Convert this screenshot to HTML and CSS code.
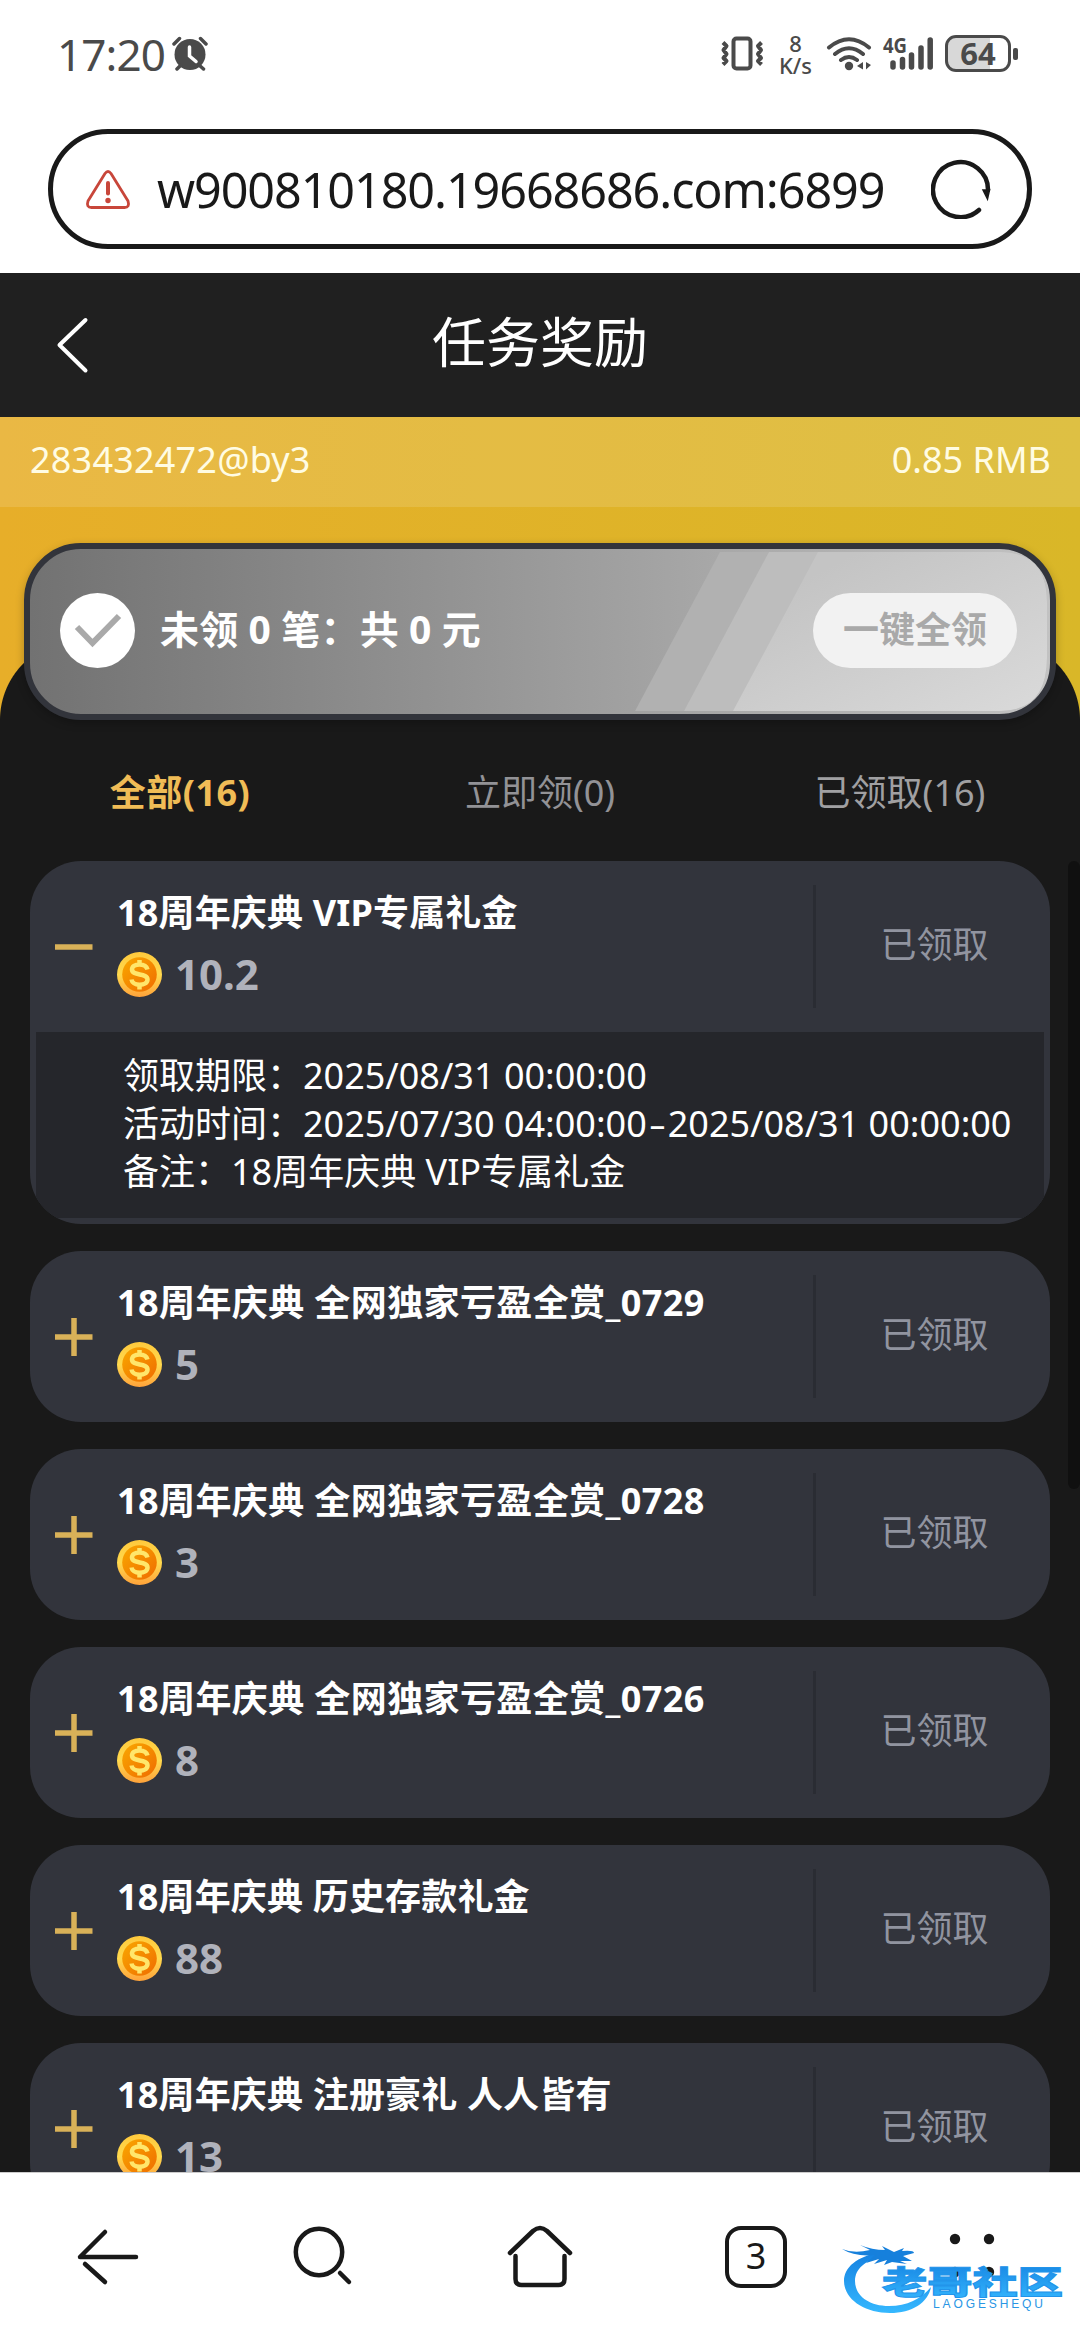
FILE: index.html
```html
<!DOCTYPE html>
<html lang="zh-CN">
<head>
<meta charset="utf-8">
<title>任务奖励</title>
<link rel="stylesheet" href="styles.css">
</head>
<body>
<svg width="0" height="0" class="defs">
  <defs>
    <linearGradient id="rim" x1="0" y1="0" x2="0" y2="1"><stop offset="0" stop-color="#ffc93c"/><stop offset=".5" stop-color="#ffd94e"/><stop offset="1" stop-color="#ffa23a"/></linearGradient>
    <linearGradient id="core" x1="0" y1="0" x2="1" y2="1"><stop offset="0" stop-color="#f9a800"/><stop offset="1" stop-color="#ef6c00"/></linearGradient>
    <linearGradient id="water" x1="0" y1="0" x2="0" y2="1"><stop offset="0" stop-color="#1480e0"/><stop offset="1" stop-color="#35b8ff"/></linearGradient>
    <symbol id="coin" viewBox="0 0 45 45">
      <circle cx="22.5" cy="22.5" r="22.5" fill="url(#rim)"/>
      <circle cx="22.5" cy="22.5" r="17.3" fill="url(#core)"/>
      <path d="M30.500 17.500C29.500 14 26.500 12.500 22.500 12.500C18 12.500 15 14.500 15 17.600C15 24.500 30.500 20.500 30.500 27.500C30.500 31 27 32.700 22.600 32.700C18 32.700 15 30.500 14.500 27.500M22.500 8V12.500M22.500 32.500V37.500" fill="none" stroke="#ffe66b" stroke-width="4.500"/>
    </symbol>
    <symbol id="plus" viewBox="0 0 38 38"><path d="M0 19H37.500M19 0V38" stroke="#d9b158" stroke-width="5.500"/></symbol>
    <symbol id="minus" viewBox="0 0 38 38"><path d="M0 19H37.500" stroke="#d9b158" stroke-width="5.500"/></symbol>
  </defs>
</svg>
<div class="screen">
  <div class="statusbar">
    <span class="clock">17:20</span>
    <svg class="alarm" width="36" height="36" viewBox="172 36 36 36">
      <circle cx="190" cy="54.500" r="15.500" fill="#4a4a4a"/>
      <path d="M174 44L179.500 38.500M206 44L200.500 38.500M181 65L177 69M199 65L203.500 69" stroke="#4a4a4a" stroke-width="3.500" stroke-linecap="round"/>
      <path d="M189.500 47V56L196 61.500" fill="none" stroke="#fff" stroke-width="3.500" stroke-linecap="round"/>
    </svg>
    <div class="spacer"></div>
    <svg class="vibrate" width="44" height="36" viewBox="720 36 44 36" fill="none" stroke="#4a4a4a">
      <rect x="733.500" y="38.500" width="17" height="30" rx="3" stroke-width="4"/>
      <path d="M723 42.500L726.500 46L723.500 50L726.500 54L723.500 58L726.500 61L723 64.500M761.500 42.500L758 46L761 50L758 54L761 58L758 61L761.500 64.500" stroke-width="4" stroke-linejoin="round"/>
    </svg>
    <div class="speed"><span>8</span><span>K/s</span></div>
    <svg class="wifi" width="46" height="36" viewBox="826 36 46 36" fill="none" stroke="#4a4a4a" stroke-width="4" stroke-linecap="round">
      <path d="M829 47.500Q849 31 869 47.500M835 54Q849 42.500 863 54M841 60Q849 54 857 60"/>
      <circle cx="849" cy="66" r="4.200" fill="#4a4a4a" stroke="none"/>
      <path d="M863 62V69.500L857 66ZM866 62V69.500L871 65Z" fill="#4a4a4a" stroke="none"/>
    </svg>
    <svg class="signal" width="52" height="36" viewBox="882 36 52 36" stroke="#4a4a4a" stroke-width="5.500" stroke-linecap="round">
      <path d="M893 63V67M902.500 59.500V67M911.500 55V67M921 48V67M930.200 40V67"/>
      <text x="883" y="53" class="net" textLength="24" lengthAdjust="spacingAndGlyphs">4G</text>
    </svg>
    <div class="battery"><span class="cell">64</span><i class="nub"></i></div>
  </div>
  <div class="urlbar">
    <svg width="46" height="42" viewBox="85 167 46 42" fill="none" stroke="#c8463a" stroke-linecap="round">
      <path d="M105 172.500Q108 168.500 111 172.500L128 200Q130 206.500 124.500 206.500H91.500Q86 206.500 88 200Z" stroke-width="2.800" stroke-linejoin="round"/>
      <path d="M108 182V192.500" stroke-width="4"/><circle cx="108" cy="199.500" r="2.700" fill="#c8463a" stroke="none"/>
    </svg>
    <span class="url">w900810180.19668686.com:6899</span>
    <svg width="60" height="60" viewBox="930 159 60 60" fill="none" stroke="#191919" stroke-width="4.500" stroke-linecap="round">
      <path d="M978 210A27.500 27.500 0 1 1 987 190"/><path d="M982 190L988.500 190L986.500 199Z" stroke-width="1.500" fill="#191919"/>
    </svg>
  </div>
  <div class="page">
    <div class="titlebar">
      <svg class="chevron" width="34" height="58" viewBox="56 316 34 58"><path d="M85.500 320L59.500 345L85.500 370.500" fill="none" stroke="#fff" stroke-width="4" stroke-linecap="round" stroke-linejoin="round"/></svg>
      <h1>任务奖励</h1>
    </div>
    <div class="hero">
      <div class="account"><span class="user">283432472@by3</span><span class="balance">0.85 RMB</span></div>
      <div class="summary">
        <svg class="stripes" width="424" height="159" viewBox="0 0 424 159" preserveAspectRatio="none">
          <defs><linearGradient id="sheen" x1="0" y1="0" x2="1" y2="1"><stop offset=".2" stop-color="#c4c4c4"/><stop offset="1" stop-color="#dadada"/></linearGradient></defs>
          <path d="M85 0H365Q412 0 412 50V105Q412 159 365 159H0Z" fill="#b1b1b1"/><path d="M134 0H365Q412 0 412 50V105Q412 159 365 159H49Z" fill="#bdbdbd"/><path d="M183 0H365Q412 0 412 50V105Q412 159 365 159H98Z" fill="url(#sheen)"/>
        </svg>
        <svg class="check" width="75" height="75" viewBox="0 0 75 75"><circle cx="37.500" cy="37.500" r="37.500" fill="#fff"/><path d="M17 34L32.500 50L59 23" fill="none" stroke="#a9a9a9" stroke-width="6"/></svg>
        <span class="pending">未领 0 笔：共 0 元</span>
        <span class="claim">一键全领</span>
      </div>
    </div>
    <div class="tabs"><span class="tab active">全部(16)</span><span class="tab">立即领(0)</span><span class="tab done">已领取(16)</span></div>
    <div class="list">
      <div class="card">
        <div class="row"><svg class="toggle"><use href="#minus"/></svg><div class="info"><div class="name">18周年庆典 VIP专属礼金</div><div class="amount"><svg class="coin"><use href="#coin"/></svg>10.2</div></div><div class="state">已领取</div></div>
        <div class="details"><p>领取期限：2025/08/31 00:00:00</p><p>活动时间：2025/07/30 04:00:00<span class="dash">-</span>2025/08/31 00:00:00</p><p>备注：18周年庆典 VIP专属礼金</p></div>
      </div>
      <div class="card"><div class="row"><svg class="toggle"><use href="#plus"/></svg><div class="info"><div class="name wide">18周年庆典 全网独家亏盈全赏_0729</div><div class="amount"><svg class="coin"><use href="#coin"/></svg>5</div></div><div class="state">已领取</div></div></div>
      <div class="card"><div class="row"><svg class="toggle"><use href="#plus"/></svg><div class="info"><div class="name wide">18周年庆典 全网独家亏盈全赏_0728</div><div class="amount"><svg class="coin"><use href="#coin"/></svg>3</div></div><div class="state">已领取</div></div></div>
      <div class="card"><div class="row"><svg class="toggle"><use href="#plus"/></svg><div class="info"><div class="name wide">18周年庆典 全网独家亏盈全赏_0726</div><div class="amount"><svg class="coin"><use href="#coin"/></svg>8</div></div><div class="state">已领取</div></div></div>
      <div class="card"><div class="row"><svg class="toggle"><use href="#plus"/></svg><div class="info"><div class="name">18周年庆典 历史存款礼金</div><div class="amount"><svg class="coin"><use href="#coin"/></svg>88</div></div><div class="state">已领取</div></div></div>
      <div class="card"><div class="row"><svg class="toggle"><use href="#plus"/></svg><div class="info"><div class="name">18周年庆典 注册豪礼 人人皆有</div><div class="amount"><svg class="coin"><use href="#coin"/></svg>13</div></div><div class="state">已领取</div></div></div>
      <i class="scrollbar"></i>
    </div>
  </div>
  <div class="navbar">
    <span class="nav"><svg width="66" height="66" viewBox="75 2224 66 66"><path d="M136 2257H80L105 2232M85 2264L105 2282"/></svg></span>
    <span class="nav"><svg width="66" height="66" viewBox="291 2224 66 66"><circle cx="319" cy="2252" r="23.200"/><path d="M340 2273L349 2282"/></svg></span>
    <span class="nav"><svg width="66" height="66" viewBox="507 2224 66 66"><path d="M510 2253L533 2231Q540 2225 547 2231L570 2253M515.500 2256V2279Q515.500 2285 521.500 2285H558.500Q564.500 2285 564.500 2279V2256"/></svg></span>
    <span class="nav"><span class="count">3</span></span>
    <span class="nav"><svg width="66" height="66" viewBox="939 2224 66 66"><g fill="#191919" stroke="none"><circle cx="955" cy="2239" r="5.200"/><circle cx="989" cy="2239" r="5.200"/><circle cx="955" cy="2272" r="5.200"/><circle cx="989" cy="2272" r="5.200"/></g></svg></span>
    <svg class="watermark" width="230" height="80" viewBox="840 2240 230 80">
      <path d="M882 2252C856 2256 844 2268 844 2281C844 2299 864 2313 890 2313C912 2313 928 2303 931 2287C921 2299 907 2306 889 2306C868 2306 855 2295 855 2281C855 2269 865 2260 882 2257Z" fill="url(#water)"/>
      <path d="M842 2249Q854 2254 870 2250L860 2245Q872 2250 885 2250L882 2246L894 2252L904 2248L902 2251Q914 2250 914 2253L903 2256L912 2261L900 2261L907 2264L892 2262L884 2265L887 2260L874 2264L879 2259L866 2263L875 2255Q855 2257 842 2249Z" fill="#1680dc"/>
      <text class="wm-name" x="882" y="2294" textLength="181" lengthAdjust="spacingAndGlyphs">老哥社区</text>
      <text class="wm-sub" x="933" y="2307.500" textLength="110">LAOGESHEQU</text>
    </svg>
  </div>
</div>
</body>
</html>
```
FILE: styles.css
```css
* { box-sizing: border-box; margin: 0; padding: 0; }
body { font-family: "Noto Sans", "Noto Sans CJK SC", sans-serif; font-size: 36px; background: #fff; color: #fff; }
span, h1, p, .name, .amount, .state { white-space: nowrap; }
svg { display: block; flex: none; }
.defs { position: absolute; }
.screen { width: 1080px; height: 2340px; display: flex; flex-direction: column; overflow: hidden; }

.statusbar { height: 129px; padding: 35px 62px 0 57px; display: flex; align-items: flex-start; color: #4a4a4a; }
.clock { font-size: 44px; line-height: 38px; width: 115px; letter-spacing: -.9px; }
.alarm { margin-top: 1px; }
.spacer { flex: 1; }
.vibrate { margin: 1px 13px 0 0; }
.speed { width: 37px; display: flex; flex-direction: column; align-items: center; font-size: 22px; line-height: 22px; margin: -3px 12px 0 0; font-weight: 500; }
.wifi { margin: 1px 10px 0 0; }
.signal { margin: 1px 11px 0 0; overflow: visible; }
.net { font-size: 21px; font-weight: 700; fill: #4a4a4a; stroke: none; }
.battery { display: flex; align-items: center; gap: 2px; }
.cell { width: 66px; height: 37px; border: 3px solid #4a4a4a; border-radius: 11px; background: linear-gradient(90deg, #d8d8d8 70%, #fff 70%); font-size: 31px; line-height: 31px; font-weight: 700; text-align: center; }
.nub { width: 5px; height: 12px; border-radius: 2px; background: #4a4a4a; }

.urlbar { flex: none; width: 984px; height: 120px; margin: 0 48px 24px; border: 5px solid #191919; border-radius: 60px; display: flex; align-items: center; padding: 0 36px 0 32px; color: #191919; }
.url { flex: 1; margin-left: 26px; font-size: 48.500px; line-height: 60px; letter-spacing: -1.08px; }

.page { height: 1899px; background: #191919; overflow: hidden; }
.titlebar { height: 144px; background: #202020; position: relative; display: flex; justify-content: center; align-items: center; padding-bottom: 6px; }
.titlebar h1 { font-size: 54px; line-height: 70px; font-weight: 400; }
.chevron { position: absolute; left: 56px; top: 43px; }
.hero { height: 303px; background: radial-gradient(circle at 80px 303px, #191919 79.500px, transparent 80.500px) 0 0 / 80px 303px no-repeat, radial-gradient(circle at 0 303px, #191919 79.500px, transparent 80.500px) 1000px 0 / 80px 303px no-repeat, linear-gradient(#191919, #191919) 80px 223px / 920px 80px no-repeat, linear-gradient(90deg, #e7ae29, #d9b728); }
.account { height: 90px; padding: 0 29px 0 30px; background: rgba(255,255,255,.13); display: flex; justify-content: space-between; line-height: 86px; color: #fffce3; }
.user { letter-spacing: .2px; }
.summary { position: relative; width: 1032px; height: 177px; margin: 36px 24px 0; border: 6px solid #32343b; border-radius: 57px; background: linear-gradient(90deg, #727272, #9e9e9e 55%, #c2c2c2); display: flex; align-items: center; padding: 0 33px 3px 30px; box-shadow: 0 3px 8px rgba(0,0,0,.25); }
.stripes { position: absolute; right: -9px; top: 3px; }
.check { position: relative; }
.pending { position: relative; flex: 1; margin-left: 25px; font-size: 39px; line-height: 48px; padding-bottom: 2px; font-weight: 700; letter-spacing: .15px; }
.claim { position: relative; width: 204px; height: 75px; line-height: 73px; border-radius: 38px; background: #f2f2f2; color: #a9a9a9; font-weight: 700; text-align: center; }

.tabs { height: 141px; display: grid; grid-template-columns: repeat(3, 360px); line-height: 146px; text-align: center; color: #929296; }
.active { color: #f0bc56; font-weight: 700; letter-spacing: .5px; }
.done { color: #a0a0a2; }
.list { position: relative; padding: 0 30px; display: flex; flex-direction: column; gap: 27px; }
.card { background: #32343c; border-radius: 51px; overflow: hidden; }
.row { height: 171px; display: flex; align-items: center; }
.toggle { width: 38px; height: 38px; margin: 0 24px 0 25px; }
.info { width: 696px; height: 171px; padding-top: 27px; }
.name { font-weight: 700; line-height: 50px; letter-spacing: .17px; }
.wide { letter-spacing: .4px; }
.amount { display: flex; align-items: center; gap: 13px; margin-top: 10px; font-size: 42px; line-height: 52px; font-weight: 700; color: #b0b2bb; }
.coin { width: 45px; height: 45px; }
.state { width: 237px; height: 123px; line-height: 120px; border-left: 3px solid #2a2c33; text-align: center; color: #9194a0; padding-left: 3px; }
.details { margin: 0 6px 6px; height: 186px; padding: 20px 0 0 87px; background: #25262b; line-height: 48px; }
.dash { display: inline-block; width: 21px; text-align: center; transform: scaleX(1.500); }
.scrollbar { position: absolute; right: 0; top: 0; width: 12px; height: 628px; border-radius: 6px; background: #101010; }

.navbar { position: relative; height: 168px; border-top: 1px solid #ccc; background: #fff; display: grid; grid-template-columns: repeat(5, 216px); align-items: center; justify-items: center; color: #191919; }
.nav svg { fill: none; stroke: #191919; stroke-width: 4.500px; stroke-linecap: round; stroke-linejoin: round; }
.count { display: block; width: 62px; height: 62px; border: 4.500px solid #191919; border-radius: 16px; text-align: center; line-height: 51px; }
.watermark { position: absolute; left: 840px; top: 67px; }
.wm-name { font: 900 32px "Noto Sans CJK SC", sans-serif; fill: url(#water); stroke: #2294ea; stroke-width: 1px; }
.wm-sub { font: 12px "Liberation Sans", sans-serif; fill: #2996e5; }
```
